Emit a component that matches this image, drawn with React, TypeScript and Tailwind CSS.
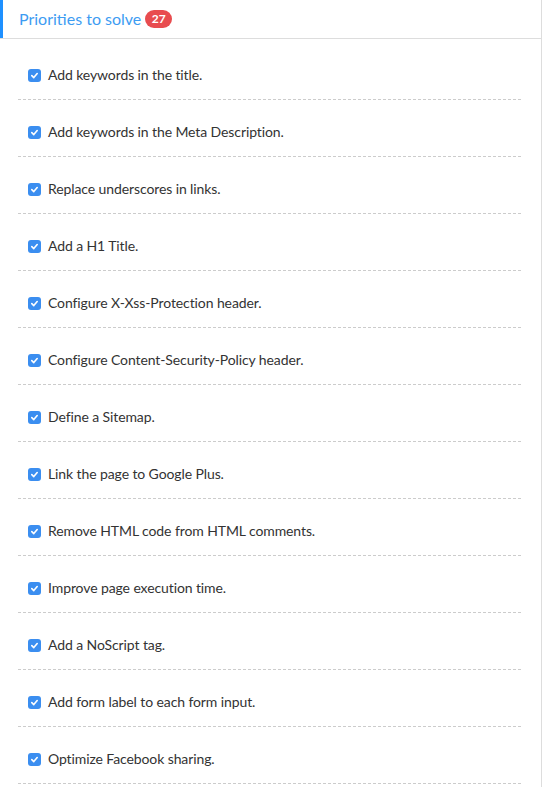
import React from "react";

const items = [
  "Add keywords in the title.",
  "Add keywords in the Meta Description.",
  "Replace underscores in links.",
  "Add a H1 Title.",
  "Configure X-Xss-Protection header.",
  "Configure Content-Security-Policy header.",
  "Define a Sitemap.",
  "Link the page to Google Plus.",
  "Remove HTML code from HTML comments.",
  "Improve page execution time.",
  "Add a NoScript tag.",
  "Add form label to each form input.",
  "Optimize Facebook sharing.",
];

function Check() {
  return (
    <span className="flex h-[13px] w-[13px] shrink-0 items-center justify-center rounded-[3px] bg-[#3b8ef0]">
      <svg width="9" height="9" viewBox="0 0 10 10" fill="none">
        <path d="M2 5.2 L4.2 7.3 L8 2.8" stroke="white" strokeWidth="1.8" strokeLinecap="round" strokeLinejoin="round" />
      </svg>
    </span>
  );
}

export default function App() {
  return (
    <div className="h-[787px] w-[542px] overflow-hidden border-r border-[#dddddd] bg-white font-['Lato',sans-serif]">
      <div className="flex h-[39px] items-center border-b border-[#dddddd]">
        <div className="flex h-[38px] items-center border-l-[3px] border-[#1e90ff] pl-[16px]">
          <span className="text-[16px] leading-none text-[#3d9cf2]">Priorities to solve</span>
          <span className="ml-[4px] flex h-[18px] w-[27px] items-center justify-center rounded-full bg-[#e84c4f] text-[12px] font-bold leading-none text-white">
            27
          </span>
        </div>
      </div>
      <div className="pl-[18px] pr-[20px] pt-[4px]">
        {items.map((t) => (
          <div
            key={t}
            className="flex items-center gap-[7px] border-b border-dashed border-[#cccccc] pl-[10px] pb-[14px] pt-[22px]"
          >
            <Check />
            <span className="text-[14px] leading-[20px] tracking-[-0.1px] text-[#333333]">{t}</span>
          </div>
        ))}
      </div>
    </div>
  );
}
